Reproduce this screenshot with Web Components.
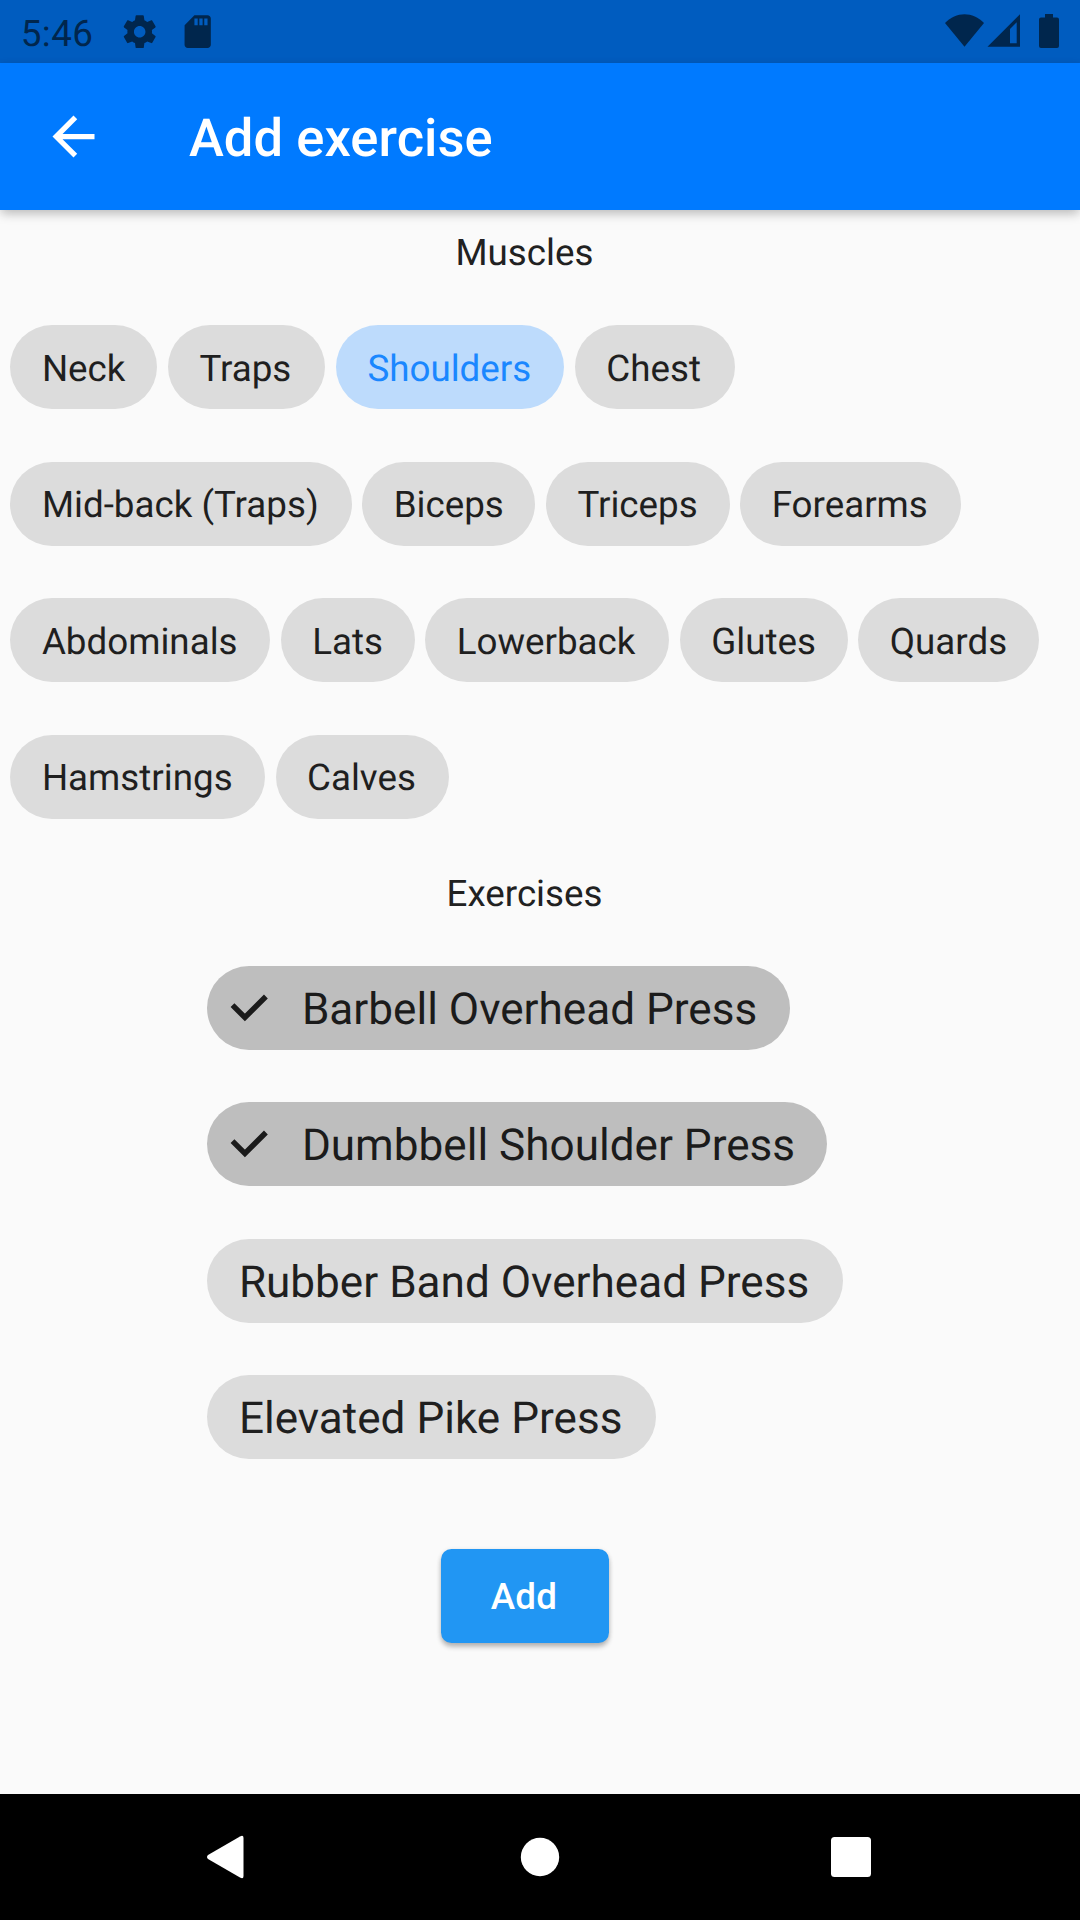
<!DOCTYPE html>
<html lang="en">
<head>
<meta charset="utf-8">
<title>Add exercise</title>
<style>
  html, body { margin: 0; height: 100%; background: #fafafa; }
  body { font-family: Roboto, "Liberation Sans", sans-serif; color: #212121; text-rendering: geometricPrecision; }
</style>
</head>
<body>
<exercise-screen></exercise-screen>
<script>
const define = (name, html) => {
  const template = document.createElement('template');
  template.innerHTML = html;
  customElements.define(name, class extends HTMLElement {
    constructor() {
      super();
      this.attachShadow({ mode: 'open' }).append(template.content.cloneNode(true));
    }
  });
};

define('status-bar', `
<style>
  :host { display: flex; align-items: center; height: 63px; box-sizing: border-box; padding: 0 14px 0 20.8px; background: #005cbf; color: #00264d; font-size: 36.75px; line-height: 43px; }
  svg { display: block; fill: currentColor; flex: none; }
  .time { width: 99.2px; padding-top: 4px; letter-spacing: .4px; }
  .sd { margin-left: 18.5px; }
  .space { flex: 1; }
</style>
<span class="time"><slot></slot></span>
<svg width="39.4" height="39.4" viewBox="0 0 24 24"><path d="M19.43 12.98c.04-.32.07-.64.07-.98s-.03-.66-.07-.98l2.11-1.65c.19-.15.24-.42.12-.64l-2-3.46c-.12-.22-.39-.3-.61-.22l-2.49 1c-.52-.4-1.08-.73-1.69-.98l-.38-2.65C14.46 2.18 14.25 2 14 2h-4c-.25 0-.46.18-.49.42l-.38 2.65c-.61.25-1.17.59-1.69.98l-2.49-1c-.23-.09-.49 0-.61.22l-2 3.46c-.13.22-.07.49.12.64l2.11 1.65c-.04.32-.07.65-.07.98s.03.66.07.98l-2.11 1.65c-.19.15-.24.42-.12.64l2 3.46c.12.22.39.3.61.22l2.49-1c.52.4 1.08.73 1.69.98l.38 2.65c.03.24.24.42.49.42h4c.25 0 .46-.18.49-.42l.38-2.65c.61-.25 1.17-.59 1.69-.98l2.49 1c.23.09.49 0 .61-.22l2-3.46c.12-.22.07-.49-.12-.64l-2.11-1.65zM12 15.5c-1.93 0-3.5-1.57-3.5-3.5s1.57-3.5 3.5-3.5 3.5 1.57 3.5 3.5-1.57 3.5-3.5 3.5z"/></svg>
<svg class="sd" width="39.4" height="39.4" viewBox="0 0 24 24"><path d="M18 2h-8L4.02 8 4 20c0 1.1.9 2 2 2h12c1.1 0 2-.9 2-2V4c0-1.1-.9-2-2-2zm-6 6h-2V4h2v4zm3 0h-2V4h2v4zm3 0h-2V4h2v4z"/></svg>
<span class="space"></span>
<svg width="122" height="63" viewBox="0 0 122 63">
  <path d="M1 23C12 11.300 29 11.300 40 23L20.500 46.700Z"/>
  <path fill-rule="evenodd" d="M76 14.300V46.700H43.500ZM72.700 22.300L66 29V43.300H72.700Z"/>
  <path d="M101 17.500V14H109V17.500H113Q115 17.500 115 19.500V46Q115 48 113 48H97Q95 48 95 46V19.500Q95 17.500 97 17.500Z"/>
</svg>`);

define('app-bar', `
<style>
  :host { display: flex; align-items: center; height: 147px; box-sizing: border-box; padding-left: 42px; position: relative; background: #007aff; color: #fff; box-shadow: 0 5px 10px -1px rgba(0,0,0,.22), 0 1px 10px rgba(0,0,0,.05); }
  svg { display: block; width: 63px; height: 63px; fill: currentColor; }
  h1 { margin: 0 0 0 84px; padding-top: 3px; font-size: 52.5px; line-height: 62px; font-weight: 500; letter-spacing: .05px; }
</style>
<svg viewBox="0 0 24 24"><path d="M20 11H7.830l5.590-5.590L12 4l-8 8 8 8 1.410-1.410L7.830 13H20v-2z"/></svg>
<h1><slot></slot></h1>`);

define('section-label', `
<style>:host { display: block; text-align: center; font-size: 36.75px; line-height: 43px; height: 43px; padding-right: 1px; }</style>
<slot></slot>`);

define('choice-chip', `
<style>
  :host { display: flex; align-items: center; box-sizing: border-box; width: calc(var(--dp) * 2.625px); height: 84px; padding: 1.5px 0 0 31.5px; border-radius: 42px; background: #dcdcdc; color: #1f1f1f; font-size: 36.75px; line-height: 43px; white-space: nowrap; }
  :host([selected]) { background: #bddbfc; color: #1a87ff; }
</style>
<slot></slot>`);

define('filter-chip', `
<style>
  :host { display: flex; align-items: center; box-sizing: border-box; width: calc(var(--dp) * 2.625px); height: 84px; padding-left: 31.5px; border-radius: 42px; background: #dcdcdc; color: #1f1f1f; font-size: 44.1px; line-height: 52px; white-space: nowrap; }
  :host([checked]) { background: #bebebe; color: #1b1b1b; padding-left: 0; }
  svg { display: none; width: 94.5px; height: 84px; flex: none; fill: none; stroke: #1b1b1b; stroke-width: 5.4; }
  :host([checked]) svg { display: block; }
  span { padding-top: 1.75px; }
</style>
<svg viewBox="0 0 94.5 84"><path d="M25.500 39.200L37.900 51.500L58.900 30.500"/></svg>
<span><slot></slot></span>`);

define('chip-wrap', `
<style>
  :host { display: flex; flex-wrap: wrap; gap: 52.5px 10.5px; padding: 21px 0 21px 10.4px; }
</style>
<slot></slot>`);

define('chip-column', `
<style>
  :host { display: flex; flex-direction: column; align-items: flex-start; width: max-content; margin: 0 auto; gap: 52.5px; padding: 21px 10.5px; }
</style>
<slot></slot>`);

define('raised-button', `
<style>
  :host { display: block; }
  button { display: block; box-sizing: border-box; width: 168px; height: 94px; margin: 0 auto; padding: 1px 2px 0 0; border: 0; border-radius: 10.5px; background: #2196f3; color: #fff; font: 500 36.75px/43px Roboto, "Liberation Sans", sans-serif; letter-spacing: .2px; box-shadow: 0 4px 5px rgba(0,0,0,.24), 0 1px 5px rgba(0,0,0,.1); }
</style>
<button><slot></slot></button>`);

define('navigation-bar', `
<style>
  :host { display: block; height: 126px; background: #000; }
  svg { display: block; fill: #fff; }
</style>
<svg width="1080" height="126" viewBox="0 0 1080 126">
  <path d="M208 61L240 42.500Q243.500 40.500 243.500 44V82Q243.500 85.500 240 83.500L208 65Q206 63 208 61Z"/>
  <circle cx="540" cy="63" r="19.200"/>
  <rect x="831" y="43" width="40" height="40" rx="3.500"/>
</svg>`);

define('exercise-screen', `
<style>
  :host { display: flex; flex-direction: column; width: 1080px; height: 1920px; overflow: hidden; }
  main { flex: 1; width: 1050px; padding-top: 21px; box-sizing: border-box; }
  .muscles { margin-top: 30.4px; }
  .second { margin-top: 32.1px; }
  .exercises { margin-top: 29.9px; }
  raised-button { margin-top: 68.6px; }
</style>
<status-bar>5:46</status-bar>
<app-bar>Add exercise</app-bar>
<main>
  <section-label>Muscles</section-label>
  <chip-wrap class="muscles">
    <choice-chip style="--dp:56">Neck</choice-chip>
    <choice-chip style="--dp:60">Traps</choice-chip>
    <choice-chip style="--dp:87" selected>Shoulders</choice-chip>
    <choice-chip style="--dp:61">Chest</choice-chip>
    <choice-chip style="--dp:130">Mid-back (Traps)</choice-chip>
    <choice-chip style="--dp:66">Biceps</choice-chip>
    <choice-chip style="--dp:70">Triceps</choice-chip>
    <choice-chip style="--dp:84">Forearms</choice-chip>
    <choice-chip style="--dp:99">Abdominals</choice-chip>
    <choice-chip style="--dp:51">Lats</choice-chip>
    <choice-chip style="--dp:93">Lowerback</choice-chip>
    <choice-chip style="--dp:64">Glutes</choice-chip>
    <choice-chip style="--dp:69">Quards</choice-chip>
    <choice-chip style="--dp:97">Hamstrings</choice-chip>
    <choice-chip style="--dp:66">Calves</choice-chip>
  </chip-wrap>
  <section-label class="second">Exercises</section-label>
  <chip-column class="exercises">
    <filter-chip style="--dp:222" checked>Barbell Overhead Press</filter-chip>
    <filter-chip style="--dp:236" checked>Dumbbell Shoulder Press</filter-chip>
    <filter-chip style="--dp:242">Rubber Band Overhead Press</filter-chip>
    <filter-chip style="--dp:171">Elevated Pike Press</filter-chip>
  </chip-column>
  <raised-button>Add</raised-button>
</main>
<navigation-bar></navigation-bar>`);
</script>
</body>
</html>
